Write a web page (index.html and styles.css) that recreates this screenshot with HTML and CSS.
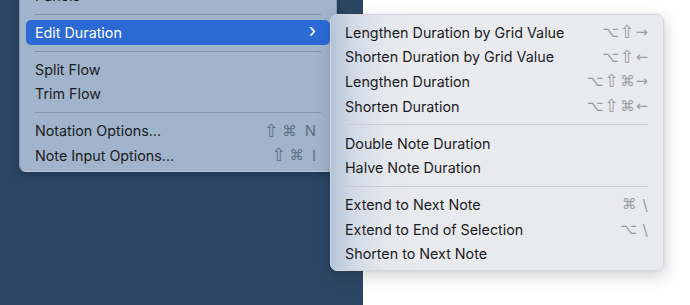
FILE: index.html
```html
<!DOCTYPE html>
<html>
  <head>
    <meta charset="UTF-8" />
    <title>Edit Duration menu</title>
    <link rel="stylesheet" href="styles.css">
  </head>
  <body>
    <div class="desktop">
      <div class="backdrop"></div>
      <div class="page"></div>

      <!-- main context menu, top cut off by the window -->
      <div class="menu main-menu">
        <div class="menu-item"><span class="label">Panels</span><span class="chevron">›</span></div>
        <div class="separator"></div>
        <div class="menu-item active"><span class="label">Edit Duration</span><span class="chevron">›</span></div>
        <div class="separator"></div>
        <div class="menu-item"><span class="label">Split Flow</span></div>
        <div class="menu-item"><span class="label">Trim Flow</span></div>
        <div class="separator"></div>
        <div class="menu-item">
          <span class="label">Notation Options...</span>
          <span class="keys"><span class="shift">⇧</span><span>⌘</span><span class="key-letter">N</span></span>
        </div>
        <div class="menu-item">
          <span class="label">Note Input Options...</span>
          <span class="keys"><span class="shift">⇧</span><span>⌘</span><span class="key-letter">I</span></span>
        </div>
      </div>

      <!-- Edit Duration submenu -->
      <div class="menu sub-menu">
        <div class="menu-item">
          <span class="label">Lengthen Duration by Grid Value</span>
          <span class="keys"><span>⌥</span><span class="shift">⇧</span><span>→</span></span>
        </div>
        <div class="menu-item">
          <span class="label">Shorten Duration by Grid Value</span>
          <span class="keys"><span>⌥</span><span class="shift">⇧</span><span>←</span></span>
        </div>
        <div class="menu-item">
          <span class="label">Lengthen Duration</span>
          <span class="keys"><span>⌥</span><span class="shift">⇧</span><span>⌘</span><span>→</span></span>
        </div>
        <div class="menu-item">
          <span class="label">Shorten Duration</span>
          <span class="keys"><span>⌥</span><span class="shift">⇧</span><span>⌘</span><span>←</span></span>
        </div>
        <div class="separator"></div>
        <div class="menu-item"><span class="label">Double Note Duration</span></div>
        <div class="menu-item"><span class="label">Halve Note Duration</span></div>
        <div class="separator"></div>
        <div class="menu-item">
          <span class="label">Extend to Next Note</span>
          <span class="keys"><span>⌘</span><span class="key-letter">\</span></span>
        </div>
        <div class="menu-item">
          <span class="label">Extend to End of Selection</span>
          <span class="keys"><span>⌥</span><span class="key-letter">\</span></span>
        </div>
        <div class="menu-item"><span class="label">Shorten to Next Note</span></div>
      </div>
    </div>
  </body>
</html>
```
FILE: styles.css
```css
:root {
  --desk-bg: #2c4764;
  --page-bg: #ffffff;
  --main-bg: #a0b4cb;
  --sub-bg: #e9eaee;
  --text-color: #1b1c1f;
  --main-key-color: #5f7088;
  --sub-key-color: #9a9ca3;
  --highlight: #2b6ad5;
  --main-sep: #8193a9;
  --sub-sep: #c9cbd0;
}

html,
body {
  margin: 0;
  padding: 0;
}

body {
  width: 690px;
  height: 305px;
  overflow: hidden;
  font-family: Inter, "Noto Sans", sans-serif;
  color: var(--text-color);
}

.desktop {
  position: relative;
  display: flex;
  width: 100%;
  height: 100%;
}

.backdrop {
  width: 363px;
  background-color: var(--desk-bg);
}

.page {
  flex: 1;
  background-color: var(--page-bg);
}

.menu {
  position: absolute;
  box-sizing: border-box;
  border-radius: 7px;
  font-size: 14.3px;
}

.main-menu {
  left: 19px;
  top: -23px;
  width: 318px;
  height: 195px;
  padding: 5px 0;
  background-color: var(--main-bg);
  border: 1px solid #8296ae;
  border-bottom-color: #b4c4d6;
  box-shadow: 0 3px 10px rgba(10, 20, 40, 0.35);
}

.sub-menu {
  left: 330px;
  top: 14px;
  width: 334px;
  height: 257px;
  padding: 5px 0;
  background: linear-gradient(to right, #b3c4d8 0px, #d2dae6 22px, #e3e6ec 50px, var(--sub-bg) 80px);
  border: 1px solid #d3d6dc;
  box-shadow: 2px 6px 16px rgba(0, 0, 0, 0.16), 0 0 3px rgba(0, 0, 0, 0.08);
}

.menu-item {
  display: flex;
  align-items: center;
  justify-content: space-between;
  height: 24.6px;
  border-radius: 5px;
}

.main-menu .menu-item {
  margin: 0 6px;
  padding: 0 14px 0 9px;
}

.sub-menu .menu-item {
  padding: 0 15px 0 14px;
}

.menu-item.active {
  background-color: var(--highlight);
  color: #ffffff;
}

.chevron {
  font-size: 19px;
  line-height: 1;
  margin-top: -3px;
}

.separator {
  height: 1px;
  margin: 6px 15px 5.4px;
}

.main-menu .separator {
  background-color: var(--main-sep);
}

.sub-menu .separator {
  background-color: var(--sub-sep);
}

.keys {
  display: flex;
  align-items: center;
  font-family: "DejaVu Sans", sans-serif;
  font-size: 14.5px;
  line-height: 1;
}

.main-menu .keys {
  color: var(--main-key-color);
  gap: 3px;
}

.sub-menu .keys {
  color: var(--sub-key-color);
  gap: 1px;
}

.shift {
  font-size: 18px;
}

.key-letter {
  font-family: Inter, "Noto Sans", sans-serif;
  margin-left: 5px;
  font-size: 15px;
}
```
